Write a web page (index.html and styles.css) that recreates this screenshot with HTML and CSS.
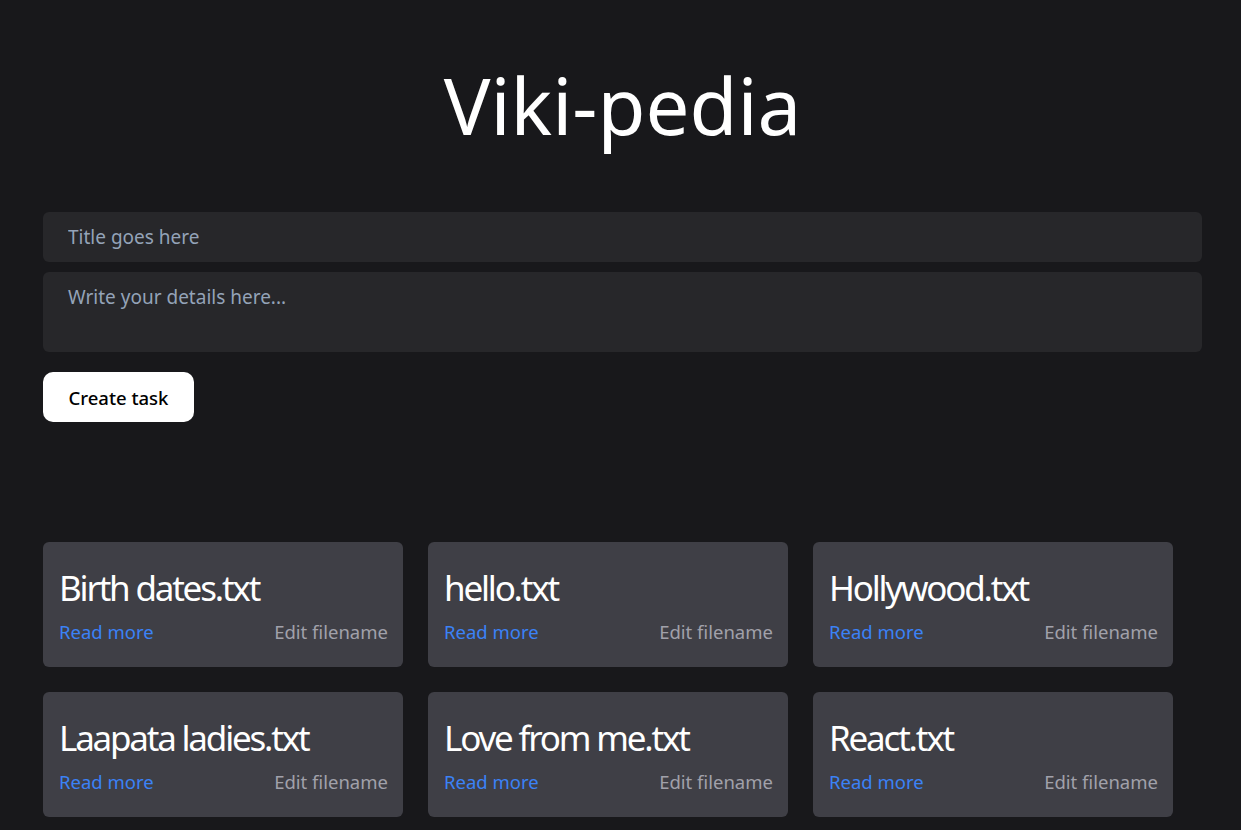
FILE: index.html
```html
<!DOCTYPE html>
<html lang="en">
<head>
<meta charset="utf-8">
<title>Viki-pedia</title>
<link rel="stylesheet" href="styles.css">
</head>
<body>
<main class="page">
  <h1 class="brand">Viki-pedia</h1>
  <form class="task-form">
    <input class="field" type="text" placeholder="Title goes here">
    <textarea class="field field-area" placeholder="Write your details here..."></textarea>
    <button class="btn" type="button">Create task</button>
  </form>
  <section class="cards">
    <div class="card">
      <h2 class="card-title">Birth dates.txt</h2>
      <div class="card-links"><a class="read" href="#">Read more</a><a class="edit" href="#">Edit filename</a></div>
    </div>
    <div class="card">
      <h2 class="card-title">hello.txt</h2>
      <div class="card-links"><a class="read" href="#">Read more</a><a class="edit" href="#">Edit filename</a></div>
    </div>
    <div class="card">
      <h2 class="card-title">Hollywood.txt</h2>
      <div class="card-links"><a class="read" href="#">Read more</a><a class="edit" href="#">Edit filename</a></div>
    </div>
    <div class="card">
      <h2 class="card-title">Laapata ladies.txt</h2>
      <div class="card-links"><a class="read" href="#">Read more</a><a class="edit" href="#">Edit filename</a></div>
    </div>
    <div class="card">
      <h2 class="card-title">Love from me.txt</h2>
      <div class="card-links"><a class="read" href="#">Read more</a><a class="edit" href="#">Edit filename</a></div>
    </div>
    <div class="card">
      <h2 class="card-title">React.txt</h2>
      <div class="card-links"><a class="read" href="#">Read more</a><a class="edit" href="#">Edit filename</a></div>
    </div>
  </section>
</main>
</body>
</html>
```
FILE: styles.css
```css
* { box-sizing: border-box; }
html, body {
  margin: 0;
  background: #18181b;
  color: #ffffff;
  font-family: "Noto Sans", "Open Sans", sans-serif;
  overflow: hidden;
}
.page {
  padding: 56px 39px 0 43px;
}
.brand {
  margin: 0;
  text-align: center;
  font-weight: 400;
  font-size: 78px;
  line-height: 96px;
  position: relative;
  top: 1px;
}
.task-form {
  margin-top: 60px;
  display: flex;
  flex-direction: column;
  gap: 10px;
  align-items: flex-start;
}
.field {
  width: 100%;
  height: 50px;
  background: #27272a;
  border: none;
  border-radius: 6px;
  padding: 0 25px;
  color: #fff;
  font-family: inherit;
  font-size: 19px;
  outline: none;
}
.field::placeholder { color: #94a3b8; }
.field-area {
  height: 80px;
  padding: 12px 25px;
  resize: none;
  line-height: 26px;
}
.btn {
  margin-top: 10px;
  width: 151px;
  height: 50px;
  background: #fff;
  color: #000;
  border: none;
  border-radius: 10px;
  font-family: inherit;
  font-size: 18.5px;
  font-weight: 500;
}
.cards {
  margin-top: 120px;
  display: flex;
  flex-wrap: wrap;
  gap: 25px;
}
.card {
  width: 360px;
  height: 125px;
  background: #3f3f46;
  border-radius: 6px;
  padding: 22px 15px 0 16px;
}
.card-title {
  margin: 0;
  font-size: 35px;
  font-weight: 400;
  letter-spacing: -2.2px;
  line-height: 48px;
}
.card-links {
  margin-top: 8px;
  display: flex;
  justify-content: space-between;
  font-size: 18.5px;
  line-height: 24px;
}
.card-links a { text-decoration: none; }
.read { color: #3b82f6; }
.edit { color: #a1a1aa; }
```
